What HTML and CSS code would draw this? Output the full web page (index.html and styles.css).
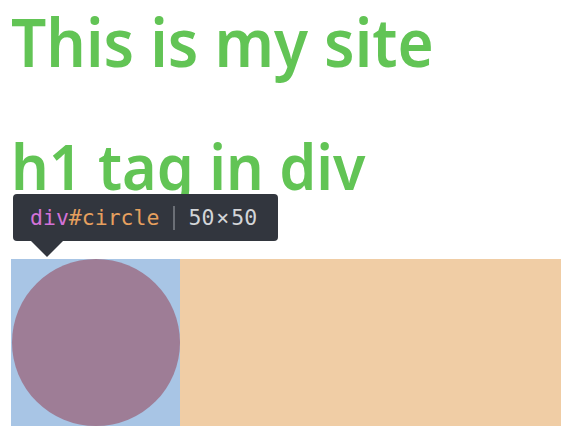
FILE: index.html
```html
<!DOCTYPE html>
<html>
<head>
<meta charset="utf-8">
<link rel="stylesheet" href="styles.css">
</head>
<body>
<h1 class="title">This is my site</h1>
<div class="inner">
  <h1 class="title sub">h1 tag in div</h1>
</div>
<div class="row">
  <div class="box"><div class="circle"></div></div>
  <div class="rest"></div>
</div>
<div class="tip">
  <span class="tag">div</span><span class="id">#circle</span><span class="sep"></span><span class="dims">50<span class="x">×</span>50</span>
</div>
<div class="arrow"></div>
</body>
</html>
```
FILE: styles.css
```css
html, body {
  margin: 0;
  background: #ffffff;
}
body {
  padding: 1px 12px 0 11px;
  font-family: "Noto Sans", "Open Sans", sans-serif;
}
.title {
  margin: 0;
  font-size: 66px;
  line-height: 80px;
  font-weight: 600;
  color: #62c455;
  transform: scaleX(0.94);
  transform-origin: 0 0;
}
.sub {
  font-size: 63px;
}
.inner {
  margin-top: 45px;
}
.row {
  display: flex;
  margin-top: 53px;
  height: 167px;
}
.box {
  width: 169px;
  background: #a8c5e5;
  display: flex;
}
.circle {
  flex: 1;
  margin-left: 1px;
  border-radius: 50%;
  background: #9e7d96;
}
.rest {
  flex: 1;
  background: #f0cda5;
}
.tip {
  position: absolute;
  left: 13px;
  top: 194px;
  width: 265px;
  height: 47px;
  box-sizing: border-box;
  padding-left: 17px;
  background: #32363e;
  border-radius: 4px;
  display: flex;
  align-items: center;
  font-family: "DejaVu Sans Mono", monospace;
  font-size: 21.5px;
}
.tag { color: #d272d8; }
.id { color: #e6a05e; }
.sep {
  width: 2px;
  height: 24px;
  background: #6b6f76;
  margin: 0 13px 0 14px;
}
.dims { color: #d3d5d8; }
.x { margin: 0 2px; }
.arrow {
  position: absolute;
  left: 31px;
  top: 241px;
  width: 0;
  height: 0;
  border-left: 16px solid transparent;
  border-right: 16px solid transparent;
  border-top: 16px solid #32363e;
}
```
